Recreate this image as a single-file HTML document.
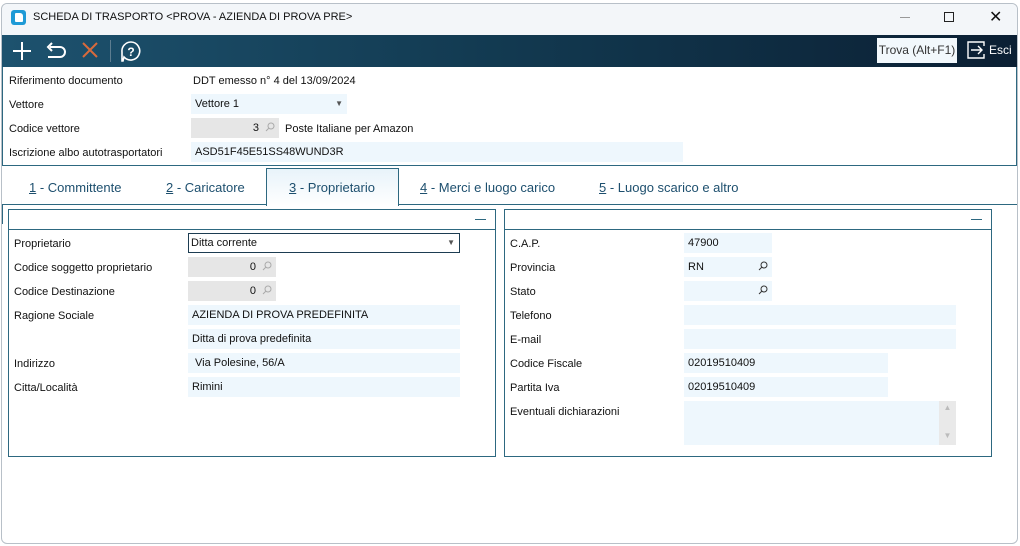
<!DOCTYPE html><html><head><style>
*{margin:0;padding:0;box-sizing:border-box}
body{width:1020px;height:546px;background:#fff;font-family:"Liberation Sans",sans-serif;font-size:11px;color:#111;position:relative;overflow:hidden}
.a{position:absolute}
.f{position:absolute;background:#eef7fd;height:20px;line-height:20px;padding-left:4px;white-space:nowrap}
.g{background:#e6e6e6;text-align:right;padding-right:20px}
.l{position:absolute;white-space:nowrap}
.tab{position:absolute;top:180px;font-size:13px;color:#1d4f6e}
.tab u{text-decoration:underline}
.mag{position:absolute;right:4px;top:4px;width:10px;height:10px}
</style></head><body>
<div class="a" style="left:1px;top:3px;width:1017px;height:541px;border:1px solid #b8c0c8;border-radius:6px"></div>
<div class="a" style="left:2px;top:4px;width:1015px;height:31px;background:#f3f6f9;border-radius:6px 6px 0 0"></div>
<div class="a" style="left:11px;top:10px;width:15px;height:15px;background:#1e9ad6;border-radius:3px"><div class="a" style="left:4px;top:3px;width:8px;height:9px;background:#fff;border-radius:1px 3px 1px 1px"></div></div>
<div class="l" style="left:33px;top:11px;font-size:11px">SCHEDA DI TRASPORTO &lt;PROVA - AZIENDA DI PROVA PRE&gt;</div>
<div class="a" style="left:900px;top:17px;width:10px;height:1px;background:#999"></div>
<div class="a" style="left:944px;top:12px;width:10px;height:10px;border:1px solid #222"></div>
<div class="l" style="left:989px;top:7px;font-size:16px">✕</div>
<div class="a" style="left:2px;top:35px;width:1015px;height:32px;background:linear-gradient(90deg,#1d526e,#123950 50%,#0b1f33)"></div>
<svg class="a" style="left:0;top:35px" width="160" height="32"><g stroke="#fff" stroke-width="2" fill="none"><path d="M22 7v18M13 16h18"/><path d="M50 12h10a5 5 0 0 1 0 10h-12M52 8l-4 4 4 4"/><path d="M131 7a9 9 0 1 1 -7 15l-1 4h-1v-9a9 9 0 0 1 9-10z" stroke-width="1.6"/><text x="131" y="21" fill="#fff" stroke="none" font-size="12" font-weight="bold" text-anchor="middle" font-family="Liberation Sans">?</text></g><path d="M83 8l14 14M97 8l-14 14" stroke="#d86a3c" stroke-width="2"/><path d="M110.5 5v22" stroke="#5d7d90"/></svg>
<div class="a" style="left:877px;top:38px;width:80px;height:25px;background:#f2f8fc;line-height:25px;text-align:center;font-size:12px;color:#333">Trova (Alt+F1)</div>
<svg class="a" style="left:966px;top:40px" width="20" height="20"><path d="M8 2H2v16h16v-4M18 6V2H8" stroke="#fff" fill="none" stroke-width="1.4"/><path d="M5 10h11M12 6l4 4-4 4" stroke="#fff" fill="none" stroke-width="1.4"/></svg>
<div class="l" style="left:989px;top:43px;color:#fff;font-size:12px">Esci</div>
<div class="a" style="left:2px;top:67px;width:1015px;height:99px;border:1px solid #2d6880;border-top:none"></div>
<div class="l" style="left:9px;top:75px">Riferimento documento</div>
<div class="l" style="left:193px;top:75px">DDT emesso n° 4 del 13/09/2024</div>
<div class="l" style="left:9px;top:99px">Vettore</div>
<div class="f" style="left:191px;top:94px;width:156px">Vettore 1<span class="a" style="right:4px;top:0;font-size:8px;color:#555">▼</span></div>
<div class="l" style="left:9px;top:123px">Codice vettore</div>
<div class="f g" style="left:191px;top:118px;width:88px">3<svg class="mag" viewBox="0 0 10 10"><circle cx="6" cy="4" r="3" stroke="#aaa" fill="none"/><path d="M4 6L1 9" stroke="#aaa"/></svg></div>
<div class="l" style="left:285px;top:123px">Poste Italiane per Amazon</div>
<div class="l" style="left:9px;top:147px">Iscrizione albo autotrasportatori</div>
<div class="f" style="left:191px;top:142px;width:492px">ASD51F45E51SS48WUND3R</div>
<div class="a" style="left:266px;top:168px;width:133px;height:38px;border:1px solid #2d6880;border-bottom:none;background:linear-gradient(#e8f3fa,#fff)"></div>
<div class="tab" style="left:29px"><u>1</u> - Committente</div>
<div class="tab" style="left:166px"><u>2</u> - Caricatore</div>
<div class="tab" style="left:289px"><u>3</u> - Proprietario</div>
<div class="tab" style="left:420px"><u>4</u> - Merci e luogo carico</div>
<div class="tab" style="left:599px"><u>5</u> - Luogo scarico e altro</div>
<div class="a" style="left:2px;top:204px;width:265px;height:1px;background:#2d6880"></div>
<div class="a" style="left:398px;top:204px;width:619px;height:1px;background:#2d6880"></div>
<div class="a" style="left:2px;top:204px;width:1px;height:20px;background:#2d6880"></div>
<div class="a" style="left:8px;top:209px;width:488px;height:248px;border:1px solid #2d6880"><div class="a" style="left:0;top:19px;width:486px;height:1px;background:#2d6880"></div><div class="a" style="right:9px;top:9px;width:11px;height:1px;background:#2d6880"></div></div>
<div class="a" style="left:504px;top:209px;width:488px;height:248px;border:1px solid #2d6880"><div class="a" style="left:0;top:19px;width:486px;height:1px;background:#2d6880"></div><div class="a" style="right:9px;top:9px;width:11px;height:1px;background:#2d6880"></div></div>
<div class="l" style="left:14px;top:238px">Proprietario</div>
<div class="f" style="left:188px;top:233px;width:272px;height:20px;background:#fff;border:1px solid #1d3d52;line-height:18px;padding-left:2px">Ditta corrente<span class="a" style="right:4px;top:0;font-size:8px;color:#555">▼</span></div>
<div class="l" style="left:14px;top:262px">Codice soggetto proprietario</div>
<div class="f g" style="left:188px;top:257px;width:88px">0<svg class="mag" viewBox="0 0 10 10"><circle cx="6" cy="4" r="3" stroke="#aaa" fill="none"/><path d="M4 6L1 9" stroke="#aaa"/></svg></div>
<div class="l" style="left:14px;top:286px">Codice Destinazione</div>
<div class="f g" style="left:188px;top:281px;width:88px">0<svg class="mag" viewBox="0 0 10 10"><circle cx="6" cy="4" r="3" stroke="#aaa" fill="none"/><path d="M4 6L1 9" stroke="#aaa"/></svg></div>
<div class="l" style="left:14px;top:310px">Ragione Sociale</div>
<div class="f" style="left:188px;top:305px;width:272px">AZIENDA DI PROVA PREDEFINITA</div>
<div class="f" style="left:188px;top:329px;width:272px">Ditta di prova predefinita</div>
<div class="l" style="left:14px;top:358px">Indirizzo</div>
<div class="f" style="left:188px;top:353px;width:272px;padding-left:7px">Via Polesine, 56/A</div>
<div class="l" style="left:14px;top:382px">Citta/Località</div>
<div class="f" style="left:188px;top:377px;width:272px">Rimini</div>
<div class="l" style="left:510px;top:238px">C.A.P.</div>
<div class="f" style="left:684px;top:233px;width:88px">47900</div>
<div class="l" style="left:510px;top:262px">Provincia</div>
<div class="f" style="left:684px;top:257px;width:88px">RN<svg class="mag" viewBox="0 0 10 10"><circle cx="6" cy="4" r="3" stroke="#333" fill="none"/><path d="M4 6L1 9" stroke="#333"/></svg></div>
<div class="l" style="left:510px;top:286px">Stato</div>
<div class="f" style="left:684px;top:281px;width:88px"><svg class="mag" viewBox="0 0 10 10"><circle cx="6" cy="4" r="3" stroke="#333" fill="none"/><path d="M4 6L1 9" stroke="#333"/></svg></div>
<div class="l" style="left:510px;top:310px">Telefono</div>
<div class="f" style="left:684px;top:305px;width:272px"></div>
<div class="l" style="left:510px;top:334px">E-mail</div>
<div class="f" style="left:684px;top:329px;width:272px"></div>
<div class="l" style="left:510px;top:358px">Codice Fiscale</div>
<div class="f" style="left:684px;top:353px;width:204px">02019510409</div>
<div class="l" style="left:510px;top:382px">Partita Iva</div>
<div class="f" style="left:684px;top:377px;width:204px">02019510409</div>
<div class="l" style="left:510px;top:406px">Eventuali dichiarazioni</div>
<div class="f" style="left:684px;top:401px;width:272px;height:44px"><div class="a" style="right:0;top:0;width:17px;height:44px;background:#e9e9e9;color:#bbb;font-size:8px;text-align:center;line-height:14px">▲<br><br>▼</div></div>
</body></html>
